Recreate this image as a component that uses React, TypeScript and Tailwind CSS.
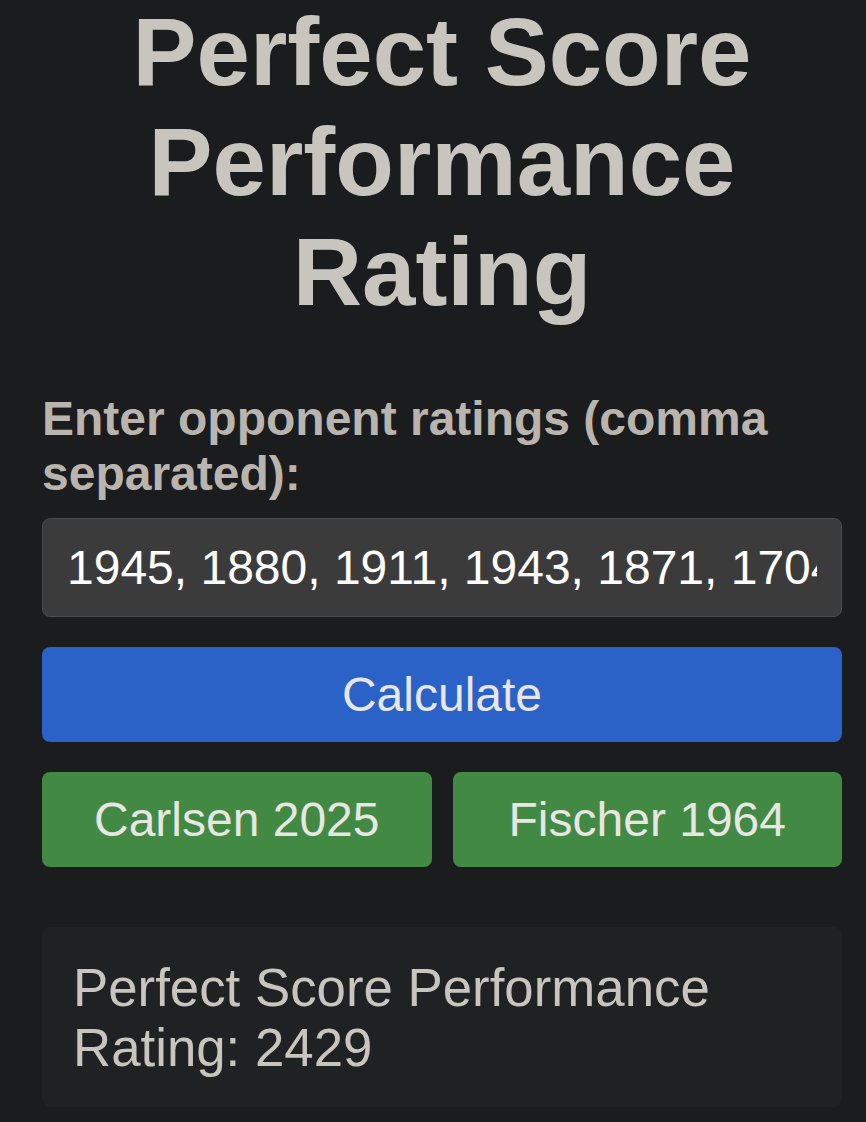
import { useState } from "react";

const presets: Record<string, number[]> = {
  carlsen: [1945, 1880, 1911, 1943, 1871, 1704, 1933, 1866, 1725],
  fischer: [2620, 2540, 2600, 2580, 2520, 2590, 2560, 2610, 2550, 2570, 2530],
};

export default function App() {
  const [ratings, setRatings] = useState(presets.carlsen.join(", "));
  const [result, setResult] = useState<number | null>(2429);

  const calculate = () => {
    const nums = ratings
      .split(",")
      .map((s) => parseInt(s.trim(), 10))
      .filter((n) => !isNaN(n));
    if (nums.length === 0) {
      setResult(null);
      return;
    }
    const avg = nums.reduce((a, b) => a + b, 0) / nums.length;
    setResult(Math.round(avg + 800));
  };

  return (
    <div className="min-h-screen bg-[#1b1c1e] font-['Liberation_Sans',Arial,sans-serif] leading-[1.15] text-[#c8c5bf]">
      <div className="w-[800px] ml-[42px] pb-10">
        <h1 className="-mt-[3px] text-center text-[96px] leading-[110px] font-bold text-[#c8c5bf]">
          Perfect Score Performance Rating
        </h1>

        <label className="block mt-[64px] text-[48px] leading-[55px] font-bold text-[#b9b4ad]">
          Enter opponent ratings (comma separated):
        </label>

        <input
          type="text"
          value={ratings}
          onChange={(e) => setRatings(e.target.value)}
          className="mt-[17px] block w-full h-[99px] px-[24px] rounded-[8px] border border-[#4a4b4c] bg-[#3b3b3b] text-[48px] text-white outline-none"
        />

        <button
          onClick={calculate}
          className="mt-[30px] block w-full h-[95px] rounded-[8px] bg-[#2a62c8] text-[48px] text-[#e8e6e3]"
        >
          Calculate
        </button>

        <div className="mt-[30px] grid grid-cols-2 gap-[21px]">
          <button
            onClick={() => setRatings(presets.carlsen.join(", "))}
            className="h-[95px] rounded-[8px] bg-[#428a43] text-[48px] text-[#e8e6e3]"
          >
            Carlsen 2025
          </button>
          <button
            onClick={() => setRatings(presets.fischer.join(", "))}
            className="h-[95px] rounded-[8px] bg-[#428a43] text-[48px] text-[#e8e6e3]"
          >
            Fischer 1964
          </button>
        </div>

        <div className="mt-[60px] rounded-[8px] bg-[#1f2123] px-[31px] pt-[31px] pb-[29px] text-[52.8px] leading-[60px] text-[#c8c5bf]">
          {result !== null ? `Perfect Score Performance Rating: ${result}` : "Enter valid ratings"}
        </div>
      </div>
    </div>
  );
}
